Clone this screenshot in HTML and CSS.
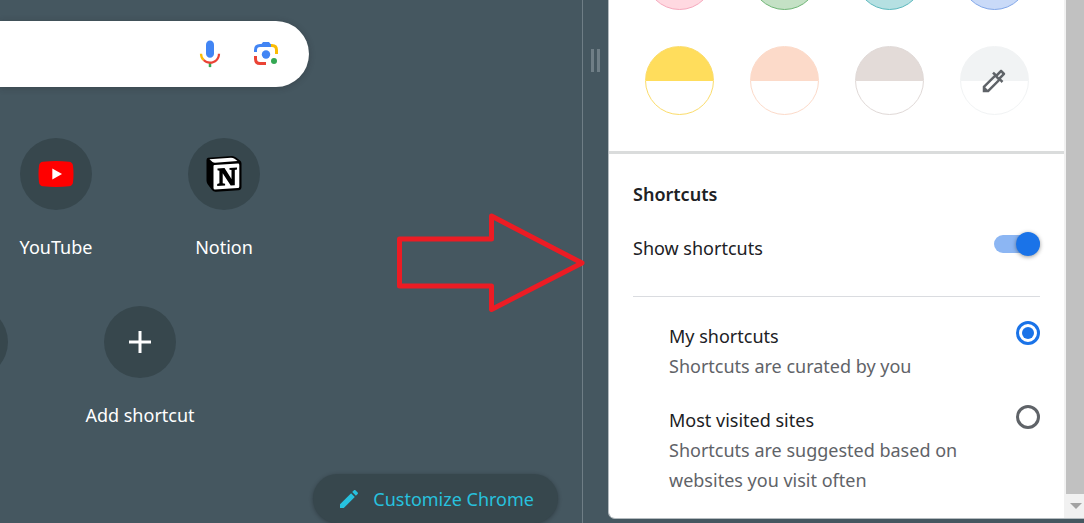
FILE: index.html
```html
<!DOCTYPE html>
<html lang="en">
<head>
    <meta charset="UTF-8">
    <meta name="viewport" content="width=device-width, initial-scale=1.0">
    <title>New Tab</title>
    <link rel="stylesheet" href="styles.css">
</head>
<body>

    <main class="new-tab">
        <div class="search-bar">
            <button class="search-btn" aria-label="Search by voice">
                <svg width="30" height="30" viewBox="0 0 24 24">
                    <path fill="#4285f4" d="M12 15c1.800 0 3.200-1.400 3.200-3.200V4.400C15.200 2.600 13.800 1.200 12 1.200S8.800 2.600 8.800 4.400v7.400C8.800 13.600 10.200 15 12 15z"/>
                    <path fill="#34a853" d="M11 18.500h2v4h-2z"/>
                    <path fill="#fbbc04" d="M7.700 16.200A6.400 6.400 0 0 1 5.700 11.700H3.900c0 2.300.9 4.200 2.400 5.700z"/>
                    <path fill="#ea4335" d="M18.300 11.700c0 3.600-2.700 6.300-6.300 6.300-1.700 0-3.200-.7-4.300-1.800l-1.400 1.200C7.800 18.900 9.700 19.800 12 19.800c4.500 0 8.100-3.400 8.100-8.100z"/>
                </svg>
            </button>
            <button class="search-btn" aria-label="Search by image">
                <svg width="30" height="30" viewBox="0 0 30 30">
                    <path fill="none" stroke="#4285f4" stroke-width="3" d="M4.500 13v-2q0-4.500 4.500-4.500h12"/>
                    <path fill="#4285f4" d="M9 7l3-4h6l3 4z"/>
                    <path fill="none" stroke="#fbbc04" stroke-width="3" d="M20 6.500h1q4.500 0 4.500 4.500v4"/>
                    <path fill="none" stroke="#ea4335" stroke-width="3" d="M4.500 17v3q0 4.500 4.500 4.500h6"/>
                    <circle fill="#4285f4" cx="15" cy="15.500" r="4.200"/>
                    <circle fill="#34a853" cx="23" cy="22" r="3"/>
                </svg>
            </button>
        </div>

        <nav class="shortcuts">
            <div class="shortcut-row first">
                <a class="shortcut" href="#">
                    <span class="shortcut-icon">
                        <svg width="36" height="26" viewBox="0 0 36 26">
                            <path fill="#f00" d="M5 .7Q18-.5 31 .7q3.500.3 4 4 1 8.300 0 16.600-.5 3.700-4 4-13 1.200-26 0-3.500-.3-4-4-1-8.300 0-16.600.5-3.700 4-4z"/>
                            <path fill="#fff" d="M14.300 7.500v11l9.700-5.500z"/>
                        </svg>
                    </span>
                    <span>YouTube</span>
                </a>
                <a class="shortcut" href="#">
                    <span class="shortcut-icon">
                        <svg width="36" height="36" viewBox="0 0 36 36">
                            <path fill="#000" d="M2 1.700L26 0q2 0 4 1.500l4 3q1.500 1 1.500 3V31q0 3-3 3.200L10 35.700q-2.500.2-4-1.800l-4.500-6Q.5 26.500.5 24.500V4q0-2 1.500-2.300z"/>
                            <path fill="#fff" d="M3.500 3.200L25 1.700q2 0 3.500 1l3 2.300L9 6.700q-1.500 0-2.500-.8z"/>
                            <path fill="#fff" d="M8.500 9l23.500-1.400q1.300 0 1.300 1.300V30.500q0 1.500-1.500 1.600L9 33.500q-1.500 0-1.500-1.500V10q0-1 1-1z"/>
                            <path fill="#000" d="M11.500 12.500l7-.4 7 11v-9l-2-.4v-1.800l7.500-.4v1.900l-2.200.7v15.200l-4.100.3-8-12.300v9.900l2.400.5v1.800l-7.900.4v-1.800l2.200-.8V14.800l-1.900-.5z"/>
                        </svg>
                    </span>
                    <span>Notion</span>
                </a>
            </div>
            <div class="shortcut-row second">
                <a class="shortcut" href="#" aria-label="Shortcut">
                    <span class="shortcut-icon"></span>
                </a>
                <button class="shortcut">
                    <span class="shortcut-icon">
                        <svg width="24" height="24" viewBox="0 0 24 24">
                            <path fill="none" stroke="#fff" stroke-width="3" d="M1 12h22M12 1v22"/>
                        </svg>
                    </span>
                    <span>Add shortcut</span>
                </button>
            </div>
        </nav>

        <button class="customize">
            <svg width="24" height="24" viewBox="0 0 24 24">
                <path fill="#27c1de" d="M3 17.200V21h3.800L17.800 9.900l-3.700-3.700zM20.700 7c.4-.4.4-1 0-1.400l-2.300-2.300c-.4-.4-1-.4-1.400 0l-1.800 1.800 3.700 3.700z"/>
            </svg>
            Customize Chrome
        </button>
    </main>

    <div class="resizer"><span></span><span></span></div>

    <aside class="side-panel">
        <div class="panel-content">
            <div class="swatches">
                <button class="swatch pink" aria-label="Pink"></button>
                <button class="swatch green" aria-label="Green"></button>
                <button class="swatch aqua" aria-label="Aqua"></button>
                <button class="swatch blue" aria-label="Blue"></button>
                <button class="swatch yellow" aria-label="Yellow"></button>
                <button class="swatch peach" aria-label="Peach"></button>
                <button class="swatch taupe" aria-label="Taupe"></button>
                <button class="swatch custom" aria-label="Custom color">
                    <svg width="30" height="30" viewBox="0 0 24 24">
                        <path fill="#5f6368" d="M17.660 5.410l.92.920-2.690 2.690-.92-.920 2.690-2.690M17.670 3c-.26 0-.51.100-.71.290l-3.120 3.120-1.930-1.910-1.410 1.410 1.420 1.420L3 16.250V21h4.750l8.920-8.920 1.420 1.420 1.410-1.410-1.920-1.920 3.120-3.120c.4-.4.4-1.030.010-1.420l-2.340-2.340c-.2-.190-.45-.290-.7-.290zM6.920 19L5 17.080l8.060-8.060 1.920 1.920L6.920 19z"/>
                    </svg>
                </button>
            </div>

            <section class="settings">
                <h2>Shortcuts</h2>
                <div class="toggle-row">
                    <label for="show-shortcuts">Show shortcuts</label>
                    <input type="checkbox" id="show-shortcuts" class="toggle" checked>
                </div>
                <div class="options">
                    <div class="option">
                        <label for="my-shortcuts">My shortcuts
                            <small>Shortcuts are curated by you</small>
                        </label>
                        <input type="radio" name="shortcut-type" id="my-shortcuts" checked>
                    </div>
                    <div class="option">
                        <label for="most-visited">Most visited sites
                            <small>Shortcuts are suggested based on websites you visit often</small>
                        </label>
                        <input type="radio" name="shortcut-type" id="most-visited">
                    </div>
                </div>
            </section>
        </div>
        <div class="scrollbar">
            <div class="thumb"></div>
            <button class="scroll-down" aria-label="Scroll down"></button>
        </div>
    </aside>

    <svg class="pointer-arrow" width="192" height="102" viewBox="0 0 192 102">
        <path fill="none" stroke="#ec1c24" stroke-width="5" stroke-linejoin="round" d="M4.500 27h92V4L187 51 96.500 97.500V74h-92z"/>
    </svg>

</body>
</html>
```

FILE: styles.css
```css
* { box-sizing: border-box; }

body {
    margin: 0;
    min-height: 100vh;
    display: flex;
    overflow: hidden;
    background: #455760;
    color: #202124;
    font-family: "Segoe UI", "Noto Sans", sans-serif;
    font-size: 18px;
    line-height: 30px;
}

button {
    border: none;
    padding: 0;
    background: none;
    color: inherit;
    font: inherit;
    cursor: pointer;
}

svg { display: block; }

/* New tab page */
.new-tab {
    flex: 1;
    min-width: 0;
    display: flex;
    flex-direction: column;
    padding-top: 21px;
    overflow: hidden;
    border-right: 1px solid #6f7e86;
}

.search-bar {
    height: 66px;
    display: flex;
    align-items: center;
    justify-content: flex-end;
    gap: 26px;
    margin-right: 273px;
    padding-right: 28px;
    border-radius: 0 33px 33px 0;
    background: #fff;
    box-shadow: 0 1px 6px rgba(32, 33, 36, 0.3);
}

.shortcuts { margin-top: 51px; }

.shortcut-row {
    display: flex;
    height: 168px;
}
/* the rows run past the left edge of the window */
.shortcut-row.first { margin-left: -28px; }
.shortcut-row.second { margin-left: -112px; }

.shortcut {
    width: 168px;
    display: flex;
    flex-direction: column;
    align-items: center;
    justify-content: flex-start;
    gap: 22px;
    color: #fff;
    text-decoration: none;
}

.shortcut-icon {
    width: 72px;
    height: 72px;
    display: flex;
    align-items: center;
    justify-content: center;
    border-radius: 50%;
    background: #37474d;
}

.customize {
    height: 49px;
    display: flex;
    align-items: center;
    gap: 12px;
    align-self: flex-end;
    margin: auto 24px 1px 0;
    padding: 0 24px;
    border-radius: 25px;
    background: #37474d;
    color: #27c1de;
    box-shadow: 0 1px 4px rgba(0, 0, 0, 0.3);
}

/* Drag handle between page and panel */
.resizer {
    width: 25px;
    display: flex;
    justify-content: center;
    gap: 3px;
    padding-top: 49px;
}
.resizer span {
    width: 3px;
    height: 23px;
    background: #6f7e86;
}

/* Side panel */
.side-panel {
    width: 476px;
    display: flex;
    margin-bottom: 5px;
    overflow: hidden;
    border-left: 1px solid #b4bbbf;
    border-bottom: 1px solid #b4bbbf;
    border-radius: 0 0 0 7px;
    background: #fff;
}

.panel-content { flex: 1; }

.swatches {
    display: grid;
    grid-template-columns: repeat(4, 69px);
    justify-content: center;
    gap: 36px;
    margin-top: -59px;
    padding-bottom: 36px;
    border-bottom: 3px solid #dadcdc;
}

.swatch {
    height: 69px;
    display: flex;
    align-items: center;
    justify-content: center;
    border: 1px solid;
    border-radius: 50%;
}
.pink { background: #ffd9e1; border-color: #f5a9bd; }
.green { background: #c4e1c5; border-color: #6fb576; }
.aqua { background: #b5e0e2; border-color: #5cb8bd; }
.blue { background: #c9daf8; border-color: #82a7e8; }
.yellow { background: linear-gradient(#ffdd5c 50%, #fff 50%); border-color: #fbdc6a; }
.peach { background: linear-gradient(#fcdac9 50%, #fff 50%); border-color: #fcdac9; }
.taupe { background: linear-gradient(#e3dbd8 50%, #fff 50%); border-color: #e0d9d7; }
.custom { background: linear-gradient(#f1f3f4 50%, #fff 50%); border-color: #f1f3f4; }

.settings { padding: 25px 24px 21px; }

.settings h2 {
    margin: 0 0 24px;
    font-size: 18px;
    font-weight: 600;
}

.toggle-row {
    display: flex;
    justify-content: space-between;
    padding-bottom: 33px;
    border-bottom: 1px solid #dadce0;
}

.toggle {
    appearance: none;
    width: 46px;
    height: 18px;
    display: flex;
    align-items: center;
    margin: 2px 0;
    border-radius: 9px;
    background: #8cb6f3;
}
.toggle::before {
    content: "";
    width: 24px;
    height: 24px;
    border-radius: 50%;
    background: #1a73e8;
    box-shadow: 0 1px 4px rgba(0, 0, 0, 0.4);
}
.toggle:checked { justify-content: flex-end; }

.options {
    display: flex;
    flex-direction: column;
    gap: 24px;
    padding: 24px 0 0 36px;
}

.option {
    display: flex;
    align-items: flex-start;
    justify-content: space-between;
    gap: 48px;
}

.option small {
    display: block;
    color: #5f6368;
    font-size: 18px;
}

.option input {
    appearance: none;
    flex: none;
    width: 24px;
    height: 24px;
    margin: 0;
    border: 3px solid #5f6368;
    border-radius: 50%;
}
.option input:checked {
    padding: 3px;
    border-color: #1a73e8;
    background: #1a73e8 content-box;
}

.scrollbar {
    width: 20px;
    display: flex;
    flex-direction: column;
    background: #f1f1f1;
}
.thumb {
    flex: 1;
    margin-left: 2px;
    background: #c1c1c1;
}
.scroll-down {
    height: 24px;
    display: flex;
    align-items: center;
    justify-content: center;
    padding-left: 4px;
}
.scroll-down::before {
    content: "";
    border: 6px solid transparent;
    border-top-color: #a3a3a3;
    border-bottom: none;
}

/* Arrow annotation over the page */
.pointer-arrow {
    position: absolute;
    top: 212px;
    right: 497px;
}
```
